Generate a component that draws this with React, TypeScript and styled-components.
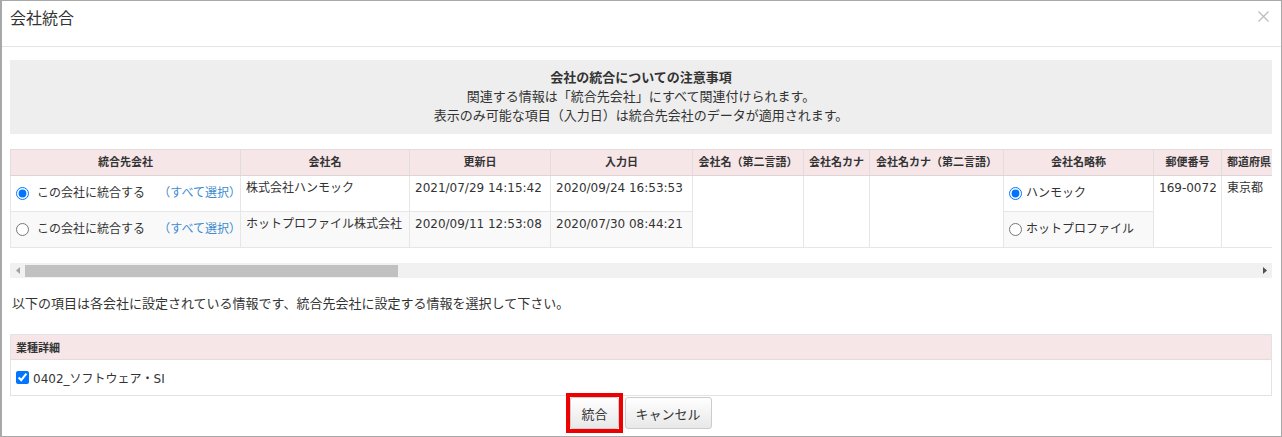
import styled, { createGlobalStyle } from 'styled-components';

const GlobalStyle = createGlobalStyle`
  html, body {
    margin: 0;
    padding: 0;
    background: #ffffff;
  }
  body {
    font-family: 'DejaVu Sans', 'Noto Sans CJK JP', sans-serif;
    color: #333333;
  }
`;

const Modal = styled.div`
  width: 1282px;
  height: 437px;
  box-sizing: border-box;
  border: 1px solid #a8a8a8;
  border-left-width: 2px;
  background: #ffffff;
  display: flex;
  flex-direction: column;
  overflow: hidden;
`;

const Header = styled.div`
  height: 46px;
  box-sizing: border-box;
  border-bottom: 1px solid #e5e5e5;
  padding: 7px 12px 0 8px;
  display: flex;
  justify-content: space-between;
  align-items: flex-start;
`;

const Title = styled.h4`
  margin: 0;
  font-size: 16px;
  line-height: 22px;
  font-weight: normal;
  color: #333333;
`;

const CloseButton = styled.button`
  border: none;
  background: none;
  padding: 0;
  margin-top: 3px;
  width: 11px;
  height: 11px;
  display: flex;
  cursor: pointer;
`;

const Body = styled.div`
  padding: 13px 9px 0 8px;
  display: flex;
  flex-direction: column;
`;

const Notice = styled.div`
  height: 74px;
  box-sizing: border-box;
  background: #eeeeee;
  padding: 8px 10px 0;
  text-align: center;
  font-size: 13px;
  line-height: 19px;
  color: #333333;
`;

const NoticeTitle = styled.div`
  font-weight: bold;
`;

const ScrollArea = styled.div`
  margin-top: 15px;
  width: 100%;
  overflow: hidden;
`;

const Table = styled.table<{ $width: number }>`
  border-collapse: collapse;
  table-layout: fixed;
  width: ${({ $width }) => $width}px;
  font-size: 12px;
  line-height: 17px;
`;

const Th = styled.th`
  height: 25px;
  padding: 0 4px;
  background: #f6e6e8;
  border: 1px solid #e3dcdd;
  border-bottom-color: #dcd4d5;
  font-size: 11px;
  font-weight: bold;
  text-align: center;
  color: #333333;
  white-space: nowrap;
  overflow: hidden;
`;

const Tr = styled.tr`
  height: 36px;
`;

const Td = styled.td<{ $alt?: boolean; $middle?: boolean }>`
  padding: ${({ $middle }) => ($middle ? '0 5px' : '4px 5px')};
  vertical-align: ${({ $middle }) => ($middle ? 'middle' : 'top')};
  background: ${({ $alt }) => ($alt ? '#f9f9f9' : '#ffffff')};
  border: 1px solid #e6e6e6;
  white-space: nowrap;
  overflow: hidden;
  color: #333333;
`;

const MergeChoice = styled.div`
  display: flex;
  align-items: center;
  justify-content: space-between;
`;

const ChoiceLabel = styled.label`
  display: flex;
  align-items: center;
  gap: 8px;
  cursor: pointer;
`;

const ShortLabel = styled.label`
  display: flex;
  align-items: center;
  gap: 4px;
  cursor: pointer;
`;

const Radio = styled.input.attrs({ type: 'radio' })`
  margin: 0;
  width: 13px;
  height: 13px;
`;

const SelectAll = styled.a`
  color: #3d8bd0;
  text-decoration: none;
  cursor: pointer;
  margin-right: -6px;
`;

const ScrollTrack = styled.div`
  margin-top: 15px;
  height: 15px;
  background: #f1f1f1;
  display: flex;
  align-items: center;
`;

const ScrollArrow = styled.div`
  width: 15px;
  height: 15px;
  display: flex;
  align-items: center;
  justify-content: center;
  flex-shrink: 0;
`;

const ScrollThumb = styled.div`
  width: 373px;
  height: 12px;
  margin-top: 1px;
  background: #c1c1c1;
`;

const ScrollSpacer = styled.div`
  flex: 1;
`;

const Guide = styled.p`
  margin: 17px 0 0 2px;
  font-size: 13px;
  line-height: 18px;
  color: #333333;
`;

const Section = styled.div`
  margin-top: 21px;
  border: 1px solid #e3e3e3;
`;

const SectionHeader = styled.div`
  height: 25px;
  box-sizing: border-box;
  padding: 0 5px;
  display: flex;
  align-items: center;
  background: #f6e6e8;
  border-bottom: 1px solid #e3dcdd;
  font-size: 11px;
  font-weight: bold;
`;

const SectionRow = styled.div`
  height: 35px;
  box-sizing: border-box;
  padding: 0 5px;
  display: flex;
  align-items: center;
  font-size: 12px;
`;

const CheckLabel = styled.label`
  display: flex;
  align-items: center;
  gap: 4px;
  cursor: pointer;
`;

const Checkbox = styled.input.attrs({ type: 'checkbox' })`
  margin: 0;
  width: 13px;
  height: 13px;
`;

const Footer = styled.div`
  display: flex;
  justify-content: center;
  gap: 6px;
  padding-top: 1px;
`;

const Highlight = styled.span`
  display: inline-flex;
  border: 4px solid #ee0000;
  margin: -4px;
`;

const Button = styled.button`
  height: 32px;
  padding: 0 10px;
  font-family: inherit;
  font-size: 13px;
  color: #333333;
  background: linear-gradient(#ffffff, #e8e8e8);
  border: 1px solid #cccccc;
  border-radius: 3px;
  cursor: pointer;
`;

const columns = [
  { label: '統合先会社', width: 230 },
  { label: '会社名', width: 169 },
  { label: '更新日', width: 141 },
  { label: '入力日', width: 142 },
  { label: '会社名（第二言語）', width: 111 },
  { label: '会社名カナ', width: 66 },
  { label: '会社名カナ（第二言語）', width: 134 },
  { label: '会社名略称', width: 150 },
  { label: '郵便番号', width: 68 },
  { label: '都道府県', width: 55 },
];

const tableWidth = columns.reduce((sum, c) => sum + c.width, 0);

const companies = [
  {
    name: '株式会社ハンモック',
    updated: '2021/07/29 14:15:42',
    created: '2020/09/24 16:53:53',
    short: 'ハンモック',
  },
  {
    name: 'ホットプロファイル株式会社',
    updated: '2020/09/11 12:53:08',
    created: '2020/07/30 08:44:21',
    short: 'ホットプロファイル',
  },
];

const ArrowIcon = ({ dir }: { dir: 'left' | 'right' }) => (
  <svg width="4" height="7" viewBox="0 0 4 7">
    <path
      d={dir === 'left' ? 'M4 0 L0 3.5 L4 7 Z' : 'M0 0 L4 3.5 L0 7 Z'}
      fill={dir === 'left' ? '#a3a3a3' : '#505050'}
    />
  </svg>
);

export default function App() {
  return (
    <>
      <GlobalStyle />
      <Modal>
        <Header>
          <Title>会社統合</Title>
          <CloseButton aria-label="閉じる">
            <svg width="11" height="11" viewBox="0 0 11 11">
              <path d="M0.5 0.5 L10.5 10.5 M10.5 0.5 L0.5 10.5" stroke="#bdbdbd" strokeWidth="1.3" />
            </svg>
          </CloseButton>
        </Header>
        <Body>
          <Notice>
            <NoticeTitle>会社の統合についての注意事項</NoticeTitle>
            <div>関連する情報は「統合先会社」にすべて関連付けられます。</div>
            <div>表示のみ可能な項目（入力日）は統合先会社のデータが適用されます。</div>
          </Notice>

          <ScrollArea>
            <Table $width={tableWidth}>
              <colgroup>
                {columns.map((c) => (
                  <col key={c.label} style={{ width: c.width }} />
                ))}
              </colgroup>
              <thead>
                <tr>
                  {columns.map((c) => (
                    <Th key={c.label}>{c.label}</Th>
                  ))}
                </tr>
              </thead>
              <tbody>
                {companies.map((co, i) => {
                  const alt = i === 1;
                  return (
                    <Tr key={co.name}>
                      <Td $alt={alt} $middle>
                        <MergeChoice>
                          <ChoiceLabel>
                            <Radio name="target" defaultChecked={i === 0} />
                            この会社に統合する
                          </ChoiceLabel>
                          <SelectAll>（すべて選択）</SelectAll>
                        </MergeChoice>
                      </Td>
                      <Td $alt={alt}>{co.name}</Td>
                      <Td $alt={alt}>{co.updated}</Td>
                      <Td $alt={alt}>{co.created}</Td>
                      {i === 0 && (
                        <>
                          <Td rowSpan={2} />
                          <Td rowSpan={2} />
                          <Td rowSpan={2} />
                        </>
                      )}
                      <Td $alt={alt} $middle>
                        <ShortLabel>
                          <Radio name="short" defaultChecked={i === 0} />
                          {co.short}
                        </ShortLabel>
                      </Td>
                      {i === 0 && (
                        <>
                          <Td rowSpan={2}>169-0072</Td>
                          <Td rowSpan={2}>東京都</Td>
                        </>
                      )}
                    </Tr>
                  );
                })}
              </tbody>
            </Table>
          </ScrollArea>

          <ScrollTrack>
            <ScrollArrow>
              <ArrowIcon dir="left" />
            </ScrollArrow>
            <ScrollThumb />
            <ScrollSpacer />
            <ScrollArrow>
              <ArrowIcon dir="right" />
            </ScrollArrow>
          </ScrollTrack>

          <Guide>以下の項目は各会社に設定されている情報です、統合先会社に設定する情報を選択して下さい。</Guide>

          <Section>
            <SectionHeader>業種詳細</SectionHeader>
            <SectionRow>
              <CheckLabel>
                <Checkbox defaultChecked />
                0402_ソフトウェア・SI
              </CheckLabel>
            </SectionRow>
          </Section>

          <Footer>
            <Highlight>
              <Button>統合</Button>
            </Highlight>
            <Button>キャンセル</Button>
          </Footer>
        </Body>
      </Modal>
    </>
  );
}
